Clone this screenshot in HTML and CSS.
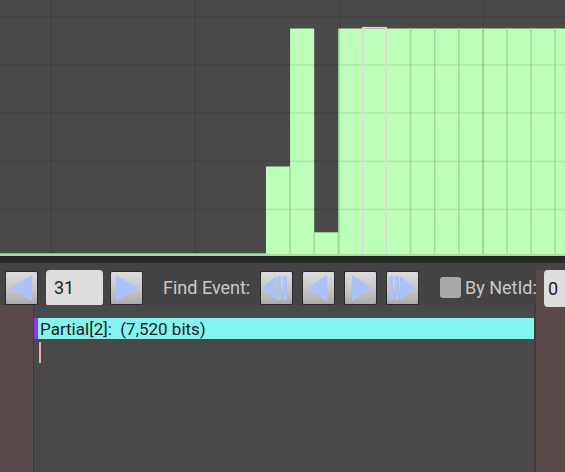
FILE: index.html
```html
<!DOCTYPE html>
<html>
<head>
<meta charset="utf-8">
<link rel="stylesheet" href="styles.css">
</head>
<body>
<div class="app">
  <svg class="chart" width="565" height="256" viewBox="0 0 565 256">
    <rect x="0" y="0" width="565" height="256" fill="#4a4a4a"/>
    <g fill="#bcffb8">
      <rect x="266" y="166.5" width="24.1" height="90"/>
      <rect x="290.1" y="28.5" width="24.1" height="228"/>
      <rect x="314.2" y="232.3" width="24.1" height="24"/>
      <rect x="338.3" y="28.5" width="226.7" height="228"/>
    </g>
    <g stroke="#a4dca0" stroke-width="1.6">
      <line x1="290.1" y1="166.5" x2="290.1" y2="256"/>
      <line x1="314.2" y1="232.3" x2="314.2" y2="256"/>
      <line x1="338.3" y1="232.3" x2="338.3" y2="256"/>
      <line x1="410.6" y1="28.5" x2="410.6" y2="256"/>
      <line x1="434.7" y1="28.5" x2="434.7" y2="256"/>
      <line x1="458.8" y1="28.5" x2="458.8" y2="256"/>
      <line x1="482.9" y1="28.5" x2="482.9" y2="256"/>
      <line x1="507" y1="28.5" x2="507" y2="256"/>
      <line x1="531.1" y1="28.5" x2="531.1" y2="256"/>
      <line x1="555.2" y1="28.5" x2="555.2" y2="256"/>
    </g>
    <g stroke="rgba(0,0,0,0.09)" stroke-width="1.5">
      <line x1="0" y1="16.7" x2="565" y2="16.7"/>
      <line x1="0" y1="64.9" x2="565" y2="64.9"/>
      <line x1="0" y1="113.1" x2="565" y2="113.1"/>
      <line x1="0" y1="161.3" x2="565" y2="161.3"/>
      <line x1="0" y1="209.5" x2="565" y2="209.5"/>
      <line x1="51" y1="0" x2="51" y2="256"/>
      <line x1="195" y1="0" x2="195" y2="256"/>
      <line x1="339.5" y1="0" x2="339.5" y2="256"/>
      <line x1="483.5" y1="0" x2="483.5" y2="256"/>
    </g>
    <rect x="362.9" y="27.7" width="23.3" height="228" fill="none" stroke="#dadada" stroke-width="1.6"/>
    <rect x="0" y="253.3" width="266" height="2.7" fill="#a3e09f"/>
    <rect x="266" y="254" width="299" height="2" fill="#a3e09f"/>
  </svg>
  <div class="sep"></div>
  <div class="lower">
    <div class="leftcol">
      <div class="toolbar">
        <button class="btn nav">
          <svg width="33" height="34" viewBox="0 0 33 34"><polygon points="5,17 27,4 27,30" class="ico"/></svg>
        </button>
        <div class="field num">31</div>
        <button class="btn nav">
          <svg width="33" height="34" viewBox="0 0 33 34"><polygon points="28,17 6,4 6,30" class="ico"/></svg>
        </button>
        <span class="label find">Find Event:</span>
        <div class="btngroup">
          <button class="btn">
            <svg width="33" height="34" viewBox="0 0 33 34"><polygon points="2,17 16,5 16,29" class="ico"/><rect x="17" y="5" width="4" height="24" class="ico"/><rect x="23" y="5" width="4" height="24" class="ico"/></svg>
          </button>
          <button class="btn">
            <svg width="33" height="34" viewBox="0 0 33 34"><polygon points="6,17 25,4 25,30" class="ico"/></svg>
          </button>
          <button class="btn">
            <svg width="33" height="34" viewBox="0 0 33 34"><polygon points="28,17 8,4 8,30" class="ico"/></svg>
          </button>
          <button class="btn">
            <svg width="33" height="34" viewBox="0 0 33 34"><rect x="3" y="5" width="4" height="24" class="ico"/><rect x="9" y="5" width="4" height="24" class="ico"/><polygon points="29,17 14,5 14,29" class="ico"/></svg>
          </button>
        </div>
        <div class="check"></div>
        <span class="label netid">By NetId:</span>
      </div>
      <div class="panel">
        <div class="strip"></div>
        <div class="main">
          <div class="event"><span class="etext">Partial[2]:&nbsp;&nbsp;(7,520 bits)</span></div>
          <div class="marker"></div>
        </div>
      </div>
    </div>
    <div class="rightcol">
      <div class="field zero">0</div>
    </div>
  </div>
</div>
</body>
</html>
```

FILE: styles.css
```css
html, body {
  margin: 0;
  padding: 0;
  background: #464646;
  width: 565px;
  height: 472px;
  overflow: hidden;
  font-family: Roboto, "Liberation Sans", sans-serif;
}
.app {
  display: flex;
  flex-direction: column;
  width: 565px;
  height: 472px;
}
.chart {
  display: block;
  flex: none;
}
.sep {
  height: 7px;
  flex: none;
  background: linear-gradient(#232323, #2c2c2c);
}
.lower {
  flex: 1;
  display: flex;
  min-height: 0;
}
.leftcol {
  width: 536px;
  display: flex;
  flex-direction: column;
}
.toolbar {
  height: 42px;
  flex: none;
  background: #444444;
  display: flex;
  align-items: flex-start;
  padding-top: 8px;
  box-sizing: border-box;
  padding-left: 5px;
}
.btn {
  width: 33px;
  height: 34px;
  padding: 0;
  margin: 0;
  border: 1px solid #2c2c2c;
  border-radius: 2px;
  background: linear-gradient(#dcdcdc, #c4c4c4 60%, #ababab);
  box-sizing: border-box;
  display: flex;
  align-items: center;
  justify-content: center;
  overflow: hidden;
  flex: none;
}
.btn svg {
  display: block;
  flex: none;
}
.ico {
  fill: #abc2fb;
}
.field {
  background: #dddddd;
  border-radius: 4px;
  color: #222;
  font-size: 18px;
  box-sizing: border-box;
}
.num {
  width: 57px;
  height: 36px;
  margin-top: -1px;
  margin-left: 8px;
  margin-right: 7px;
  padding-left: 8px;
  line-height: 36px;
  flex: none;
}
.label {
  color: #c9c9c9;
  font-size: 18px;
  line-height: 34px;
  white-space: nowrap;
}
.find {
  margin-left: 20px;
  width: 97px;
  flex: none;
}
.btngroup {
  display: flex;
  gap: 9px;
  flex: none;
}
.check {
  width: 21px;
  height: 21px;
  background: #a9a9a9;
  border-radius: 3px;
  margin-left: 21px;
  margin-top: 6px;
  margin-right: 4px;
  flex: none;
}
.panel {
  flex: 1;
  display: flex;
}
.strip {
  width: 33px;
  background: #5a4a4a;
  border-right: 1px solid #3d3d3d;
}
.main {
  flex: 1;
  background: #494949;
  padding-top: 13px;
  border-right: 2px solid #3c3c3c;
}
.event {
  height: 21px;
  background: #84f4f1;
  border-left: 4px solid #8a3cf5;
  display: flex;
  align-items: center;
  padding-left: 2px;
}
.etext {
  color: #1c1c1c;
  font-size: 17px;
  white-space: nowrap;
}
.marker {
  width: 2px;
  height: 21px;
  margin-top: 3px;
  margin-left: 5px;
  background: #f5a3ad;
}
.rightcol {
  flex: 1;
  padding-top: 7px;
  display: flex;
  flex-direction: column;
  background: linear-gradient(#444444 7px, #5a4a4a 7px);
}
.zero {
  flex: none;
  height: 37px;
  margin-left: 8px;
  border-radius: 4px 0 0 4px;
  padding-left: 4px;
  line-height: 37px;
}
```
